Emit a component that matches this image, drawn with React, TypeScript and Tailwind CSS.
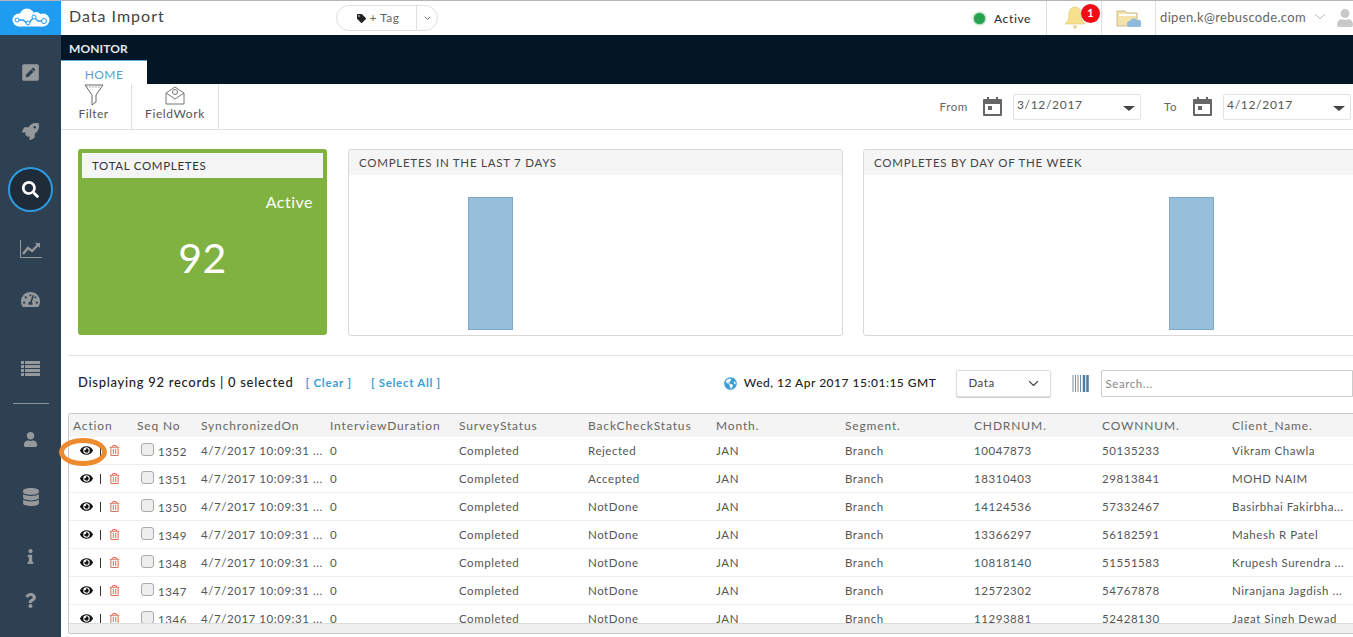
import React from "react";
import { FaPenSquare, FaRocket, FaSearch, FaTachometerAlt, FaUser, FaDatabase, FaInfo, FaQuestion, FaEye, FaRegTrashAlt, FaTag, FaGlobeAmericas } from "react-icons/fa";

const rows = [
  ["1352", "Rejected", "10047873", "50135233", "Vikram Chawla"],
  ["1351", "Accepted", "18310403", "29813841", "MOHD NAIM"],
  ["1350", "NotDone", "14124536", "57332467", "Basirbhai Fakirbha..."],
  ["1349", "NotDone", "13366297", "56182591", "Mahesh R Patel"],
  ["1348", "NotDone", "10818140", "51551583", "Krupesh Surendra ..."],
  ["1347", "NotDone", "12572302", "54767878", "Niranjana Jagdish ..."],
  ["1346", "NotDone", "11293881", "52428130", "Jagat Singh Dewad"],
];

const cols = "grid grid-cols-[64px_64px_129px_129px_129px_128px_129px_129px_128px_130px_130px] items-center";

function Logo() {
  return (
    <svg width="40" height="20" viewBox="0 0 40 20">
      <circle cx="8" cy="12" r="6.500" fill="#fff" />
      <circle cx="16" cy="8" r="7.500" fill="#fff" />
      <circle cx="25" cy="10" r="6" fill="#fff" />
      <circle cx="32" cy="12" r="6.500" fill="#fff" />
      <rect x="8" y="11" width="24" height="7.500" fill="#fff" />
      <path d="M6 12h6l5 4 6-7 4 4h7" fill="none" stroke="#1f9cf0" strokeWidth="1.300" />
      <circle cx="6" cy="12" r="2" fill="#fff" stroke="#1f9cf0" />
      <circle cx="17" cy="15" r="2" fill="#fff" stroke="#1f9cf0" />
      <circle cx="23" cy="9" r="2" fill="#fff" stroke="#1f9cf0" />
      <circle cx="33" cy="13" r="2.500" fill="#fff" stroke="#1f9cf0" />
    </svg>
  );
}

function Chevron({ w, color }: { w: number; color: string }) {
  return (
    <svg width={w} height={w * 0.6} viewBox="0 0 10 6" className="shrink-0">
      <path d="M1 1l4 4 4-4" fill="none" stroke={color} strokeWidth="1.200" />
    </svg>
  );
}

function Calendar() {
  return (
    <svg width="19" height="21" viewBox="0 0 19 21" className="shrink-0">
      <path d="M1 3h3V1h2v2h7V1h2v2h3a1 1 0 0 1 1 1v15a1 1 0 0 1-1 1H1a1 1 0 0 1-1-1V4a1 1 0 0 1 1-1zm1 5v10h15V8z" fill="#666" />
      <rect x="5" y="10" width="4" height="4" fill="#666" />
    </svg>
  );
}

function DateBox({ value }: { value: string }) {
  return (
    <div className="w-[128px] h-[26px] border border-[#e2e2e2] rounded-[2px] flex justify-between pl-[3px] pr-[5px] text-[12px] tracking-[0.7px] text-[#555]">
      <span className="leading-[20px]">{value}</span>
      <span className="mt-[11px] w-0 h-0 border-x-[6px] border-x-transparent border-t-[5px] border-t-[#444]" />
    </div>
  );
}

function ChartCard({ title, offset, className }: { title: string; offset: string; className: string }) {
  return (
    <div className={`${className} h-[187px] shrink-0 border border-[#d8d8d8] rounded-[3px] overflow-hidden flex flex-col`}>
      <div className="h-[25px] bg-[#f5f5f5] pl-[10px] text-[11.5px] leading-[26px] tracking-[0.75px] text-[#444]">{title}</div>
      <div className={`flex-1 pt-[22px] pb-[5px] ${offset}`}>
        <div className="w-[45px] h-full bg-[#97bfdc] border border-[#7fa9c7]" />
      </div>
    </div>
  );
}

export default function App() {
  return (
    <div className="w-[1353px] h-[637px] overflow-hidden flex bg-white text-[#555] font-['Lato','Noto_Sans',sans-serif]">
      <aside className="w-[61px] shrink-0 bg-[#2e4152] flex flex-col items-center text-[#96999c]">
        <div className="w-full h-[35px] bg-[#1f9cf0] border-t border-[#b5b5b5] flex items-center justify-center shrink-0"><Logo /></div>
        <FaPenSquare className="mt-[28px]" size={19} />
        <FaRocket className="mt-[41px]" size={17} />
        <div className="mt-[27px] w-[45px] h-[45px] rounded-full border-2 border-[#2e9be0] bg-[#1e2b38] flex items-center justify-center text-white">
          <FaSearch size={17} />
        </div>
        <svg width="22" height="18" viewBox="0 0 22 18" className="mt-[28px]">
          <path d="M.5 0v17.500H22" fill="none" stroke="#96999c" />
          <path d="M3 14l5-6 4 3 6-6" fill="none" stroke="#96999c" strokeWidth="2.400" />
          <path d="M15 3h5v5z" fill="#96999c" />
        </svg>
        <FaTachometerAlt className="mt-[32px]" size={19} />
        <svg width="19" height="15" viewBox="0 0 19 15" className="mt-[52px]">
          <path d="M0 0h3v3H0zM4 0h15v3H4zM0 4h3v3H0zM4 4h15v3H4zM0 8h3v3H0zM4 8h15v3H4zM0 12h3v3H0zM4 12h15v3H4z" fill="#96999c" />
        </svg>
        <div className="mt-[27px] w-[36px] border-t border-[#8f9296]" />
        <FaUser className="mt-[28px]" size={15} />
        <FaDatabase className="mt-[41px]" size={18} />
        <FaInfo className="mt-[43px]" size={15} />
        <FaQuestion className="mt-[29px]" size={15} />
      </aside>

      <main className="w-[1292px] shrink-0 flex flex-col">
        <header className="h-[35px] shrink-0 border-t border-[#b5b5b5] flex items-center">
          <div className="w-[275px] pl-[8px] text-[16px] tracking-[1px] text-[#444] -mt-[5px]">Data Import</div>
          <div className="w-[102px] h-[26px] border border-[#e0e0e0] rounded-full flex items-center text-[12px] tracking-[0.5px] text-[#666]">
            <div className="flex-1 flex items-center justify-center gap-[3px] pl-[4px]"><FaTag size={9} className="text-[#222]" />+ Tag</div>
            <div className="w-[21px] h-full border-l border-[#e0e0e0] flex items-center justify-center"><Chevron w={7} color="#555" /></div>
          </div>
          <div className="ml-[536px] w-[72px] mt-[1px] flex items-center text-[12px] tracking-[0.6px] font-medium text-[#333]">
            <span className="w-[11px] h-[11px] rounded-full bg-[#27a251] shadow-[0_0_3px_#27a251] mr-[9px]" />
            Active
          </div>
          <div className="h-full w-[55px] border-l border-[#e0e0e0] relative flex items-center pl-[17px]">
            <svg width="22" height="25" viewBox="0 0 22 25"><path d="M11 1c4 0 6 3 6 7 0 5 1 7 4 10H1c3-3 4-5 4-10 0-4 2-7 6-7zM9 20h4l-2 3z" fill="#f6e08c" stroke="#d9c67a" strokeWidth="0.6" /></svg>
            <span className="absolute left-[34px] top-[3px] w-[19px] h-[19px] rounded-full bg-[#ee0e14] text-white text-[11px] font-bold flex items-center justify-center">1</span>
          </div>
          <div className="h-full w-[54px] border-l border-[#e0e0e0] flex items-center justify-center">
            <svg width="25" height="21" viewBox="0 0 25 21"><path d="M1 3h8l2 2h10v13H1z" fill="#f3e3a8" stroke="#c9bd8f" /><rect x="3" y="6" width="17" height="2" fill="#fff" /><path d="M14 19a3 3 0 0 1 0-6 4 4 0 0 1 7-1 3.500 3.500 0 0 1 2 7z" fill="#8fbadb" /></svg>
          </div>
          <div className="h-full flex-1 border-l border-[#e0e0e0] pl-[4px] flex items-center text-[13px] tracking-[0.35px] text-[#666] whitespace-nowrap overflow-hidden">
            dipen.k@rebuscode.com
            <svg className="ml-[8px] -mt-[4px] shrink-0" width="12" height="7" viewBox="0 0 12 7"><path d="M1 1l5 5 5-5" fill="none" stroke="#bbb" /></svg>
            <FaUser className="ml-[10px] shrink-0 text-[#c9c9c9]" size={18} />
          </div>
        </header>

        <div className="h-[49px] shrink-0 bg-[#021626] flex flex-col justify-between">
          <div className="pl-[8px] pt-[5px] text-[12px] tracking-[0.1px] font-bold text-[#e8e8e8]">MONITOR</div>
          <div className="w-[86px] h-[24px] bg-white border-t border-[#5ea9d6] text-center text-[12px] leading-[27px] tracking-[0.4px] text-[#5b9fcc]">HOME</div>
        </div>

        <div className="h-[46px] shrink-0 border-b border-[#e0e0e0] flex">
          <div className="w-[71px] border-r border-[#e0e0e0] flex flex-col items-center pr-[5px]">
            <svg width="20" height="22" viewBox="0 0 20 22"><path d="M1 1h18l-7 10v7l-4 3V11z" fill="none" stroke="#666" strokeWidth="1" /><path d="M2 3h16" stroke="#aaa" strokeDasharray="2 1" /></svg>
            <span className="text-[12px] tracking-[0.4px] text-[#555] -mt-[1px]">Filter</span>
          </div>
          <div className="w-[87px] border-r border-[#e0e0e0] flex flex-col items-center">
            <svg width="20" height="19" viewBox="0 0 20 19" className="mt-[2px]"><path d="M1 7l9-6 9 6v11H1z" fill="none" stroke="#777" /><path d="M1 7l9 6 9-6" fill="none" stroke="#777" /><circle cx="10" cy="6" r="2.500" fill="none" stroke="#777" /></svg>
            <span className="text-[12px] tracking-[0.6px] text-[#555]">FieldWork</span>
          </div>
          <div className="ml-auto flex items-center gap-[15px] mr-[2px] text-[11.5px] tracking-[0.6px] text-[#666]">
            <span>From</span>
            <Calendar />
            <div className="-ml-[4px]"><DateBox value="3/12/2017" /></div>
            <span className="ml-[8px]">To</span>
            <div className="ml-[1px]"><Calendar /></div>
            <div className="-ml-[4px]"><DateBox value="4/12/2017" /></div>
          </div>
        </div>

        <section className="h-[226px] shrink-0 ml-[7px] pt-[19px] pl-[10px] border-b border-[#e4e4e4] flex gap-[21px] overflow-hidden">
          <div className="w-[249px] h-[186px] shrink-0 bg-[#80b241] rounded-[3px] p-[4px] text-white">
            <div className="h-[25px] bg-[#f5f5f5] pl-[10px] text-[11.5px] leading-[26px] tracking-[0.7px] text-[#333]">TOTAL COMPLETES</div>
            <div className="text-right pr-[10px] pt-[12px] text-[16px] tracking-[0.5px]">Active</div>
            <div className="text-center pt-[20px] text-[41px] leading-[48px] tracking-[0.5px]">92</div>
          </div>
          <ChartCard title="COMPLETES IN THE LAST 7 DAYS" offset="pl-[119px]" className="w-[495px]" />
          <ChartCard title="COMPLETES BY DAY OF THE WEEK" offset="pl-[305px]" className="w-[495px] -ml-[1px]" />
        </section>

        <div className="h-[57px] shrink-0 pl-[17px] flex items-center pb-[3px] text-[#222] whitespace-nowrap">
          <span className="text-[13px] tracking-[0.7px] font-medium">Displaying 92 records | 0 selected</span>
          <span className="ml-[12px] text-[#3a9fd8] text-[11.5px] font-bold tracking-[0.8px]">[ Clear ]</span>
          <span className="ml-[19px] text-[#3a9fd8] text-[11.5px] font-bold tracking-[0.7px]">[ Select All ]</span>
          <FaGlobeAmericas className="ml-[283px] text-[#3f9ed8] shrink-0" size={13} />
          <span className="ml-[7px] text-[12px] tracking-[0.5px] font-medium">Wed, 12 Apr 2017 15:01:15 GMT</span>
          <div className="ml-[20px] w-[95px] h-[27px] shrink-0 border border-[#ddd] rounded-[2px] shadow-[0_1px_1px_#ccc] flex items-center justify-between pl-[11px] pr-[11px] text-[11.5px] tracking-[0.6px] text-[#444]">
            Data <Chevron w={11} color="#444" />
          </div>
          <svg width="18" height="17" viewBox="0 0 18 17" className="ml-[21px] shrink-0"><path d="M1 0v17M3.500 0v17M6 0v17M8.500 0v17" stroke="#6b90ae" strokeWidth="1" /><path d="M12 0v17M15.500 0v17" stroke="#4d7ea6" strokeWidth="2.500" /></svg>
          <div className="ml-[11px] flex-1 h-[27px] border border-[#ccc] rounded-l-[2px] pl-[3px] text-[11.5px] leading-[25px] text-[#888] tracking-[0.6px]">Search...</div>
        </div>

        <div className="relative ml-[7px] h-[221px] w-[1285px] shrink-0">
          <div className="h-full border border-[#c9c9c9] border-r-0 rounded-l-[3px] overflow-hidden flex flex-col">
            <div className={`${cols} h-[23px] shrink-0 bg-[#f4f4f4] pl-[4px] text-[12px] tracking-[0.85px] text-[#666] whitespace-nowrap`}>
              {["Action", "Seq No", "SynchronizedOn", "InterviewDuration", "SurveyStatus", "BackCheckStatus", "Month.", "Segment.", "CHDRNUM.", "COWNNUM.", "Client_Name."].map((h) => (
                <div key={h}>{h}</div>
              ))}
            </div>
            <div className="flex-1 overflow-hidden">
              {rows.map((r) => (
                <div key={r[0]} className={`${cols} h-[28px] border-b border-[#eee] pl-[4px] text-[11.5px] tracking-[0.55px] text-[#555] whitespace-nowrap`}>
                  <div className="flex items-center pl-[7px] text-[#111]">
                    <FaEye size={13} />
                    <span className="w-[1px] h-[10px] bg-[#333] ml-[7px]" />
                    <FaRegTrashAlt size={11} className="ml-[8px] text-[#e0705c]" />
                  </div>
                  <div className="flex items-start">
                    <span className="ml-[4px] mt-[3px] w-[13px] h-[13px] rounded-[3px] border border-[#aaa] bg-[#eee] mr-[4px]" />
                    <span className="mt-[3px]">{r[0]}</span>
                  </div>
                  <div>4/7/2017 10:09:31 ...</div>
                  <div>0</div>
                  <div>Completed</div>
                  <div>{r[1]}</div>
                  <div>JAN</div>
                  <div>Branch</div>
                  <div>{r[2]}</div>
                  <div>{r[3]}</div>
                  <div>{r[4]}</div>
                </div>
              ))}
            </div>
            <div className="h-[10px] shrink-0 bg-[#f0f0f0] border-t border-[#ddd]" />
          </div>
          <div className="absolute left-[-9px] top-[25px] w-[48px] h-[28px] rounded-[50%] border-[5px] border-[#ee8a2f]" />
        </div>
      </main>
    </div>
  );
}
